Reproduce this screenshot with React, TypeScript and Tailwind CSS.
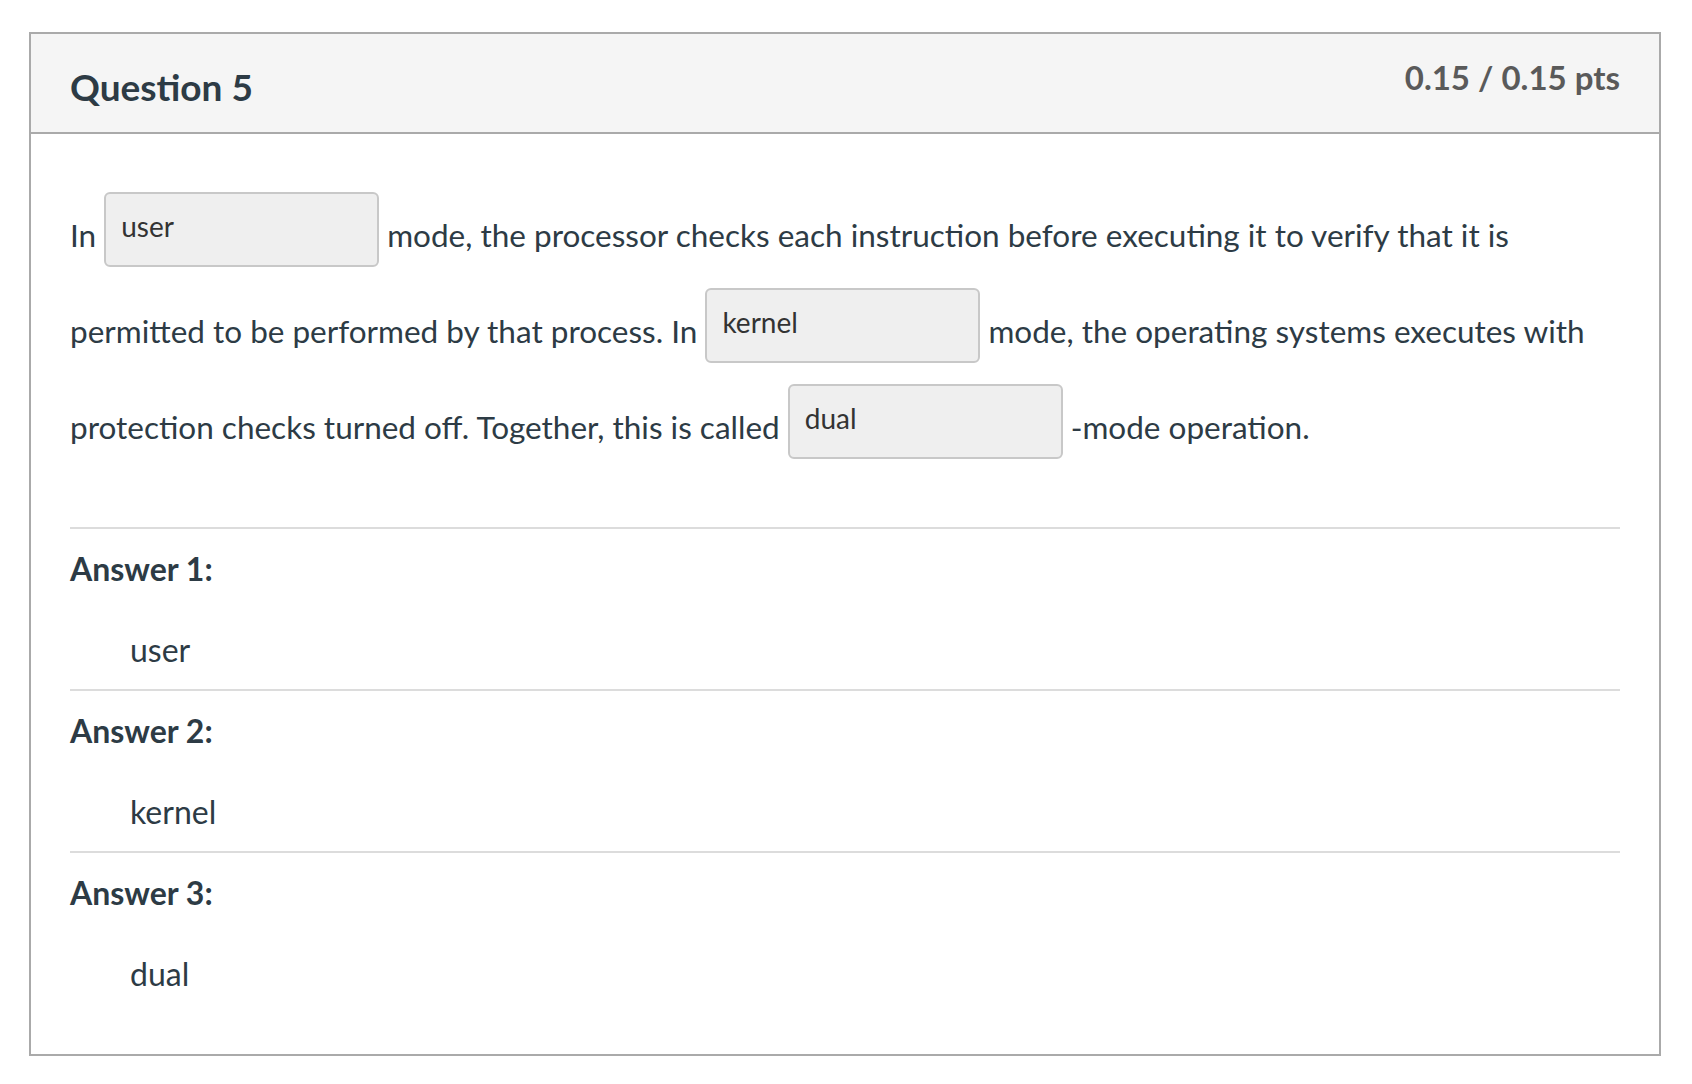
const BLANKS = ["user", "kernel", "dual"];

function Blank({ value }: { value: string }) {
  return (
    <input
      readOnly
      value={value}
      className="inline-block align-middle -mt-[8px] mb-[12px] mx-[8px] h-[75px] w-[275px] rounded-[6px] border-2 border-[#c8c8c8] bg-[#efefef] px-[15px] pb-[6px] text-[28px] text-[#333] outline-none"
      style={{ fontFamily: "Lato, sans-serif" }}
    />
  );
}

function AnswerBlock({ n, value }: { n: number; value: string }) {
  return (
    <div className="border-t-2 border-[#dcdcdc] pt-[20px] pb-[19px]">
      <div className="text-[32px] font-bold leading-[40px] text-[#2d3b45]">
        Answer {n}:
      </div>
      <div className="mt-[41px] pl-[60px] text-[32px] leading-[40px] text-[#2d3b45]">
        {value}
      </div>
    </div>
  );
}

export default function App() {
  return (
    <div
      className="min-h-screen bg-white pt-[32px] pl-[29px]"
      style={{ fontFamily: "Lato, 'Open Sans', sans-serif" }}
    >
      <div className="w-[1632px] border-2 border-[#aaaaaa]">
        <div className="flex h-[100px] items-center justify-between border-b-2 border-[#aaaaaa] bg-[#f5f5f5] px-[39px]">
          <h2 className="mt-[8px] text-[37px] font-bold text-[#2d3b45]">
            Question 5
          </h2>
          <span className="mb-[10px] text-[33px] font-bold text-[#5a5a5a]">
            0.15 / 0.15 pts
          </span>
        </div>

        <div className="px-[39px] pb-[41px]">
          <p className="mt-[53px] mb-[52px] text-[31.5px] leading-[96px] text-[#2d3b45]">
            In
            <Blank value={BLANKS[0]} />
            mode, the processor checks each instruction before executing it to
            verify that it is permitted to be performed by that process. In
            <Blank value={BLANKS[1]} />
            mode, the operating systems executes with protection checks turned
            off. Together, this is called
            <Blank value={BLANKS[2]} />
            -mode operation.
          </p>

          {BLANKS.map((b, i) => (
            <AnswerBlock key={b} n={i + 1} value={b} />
          ))}
        </div>
      </div>
    </div>
  );
}
